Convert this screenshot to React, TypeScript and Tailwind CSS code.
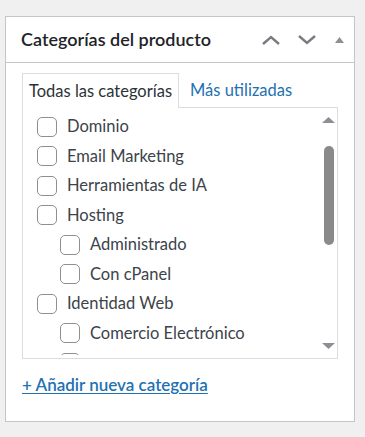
import React from 'react';

type Category = {
  name: string;
  child?: boolean;
};

const categories: Category[] = [
  { name: 'Dominio' },
  { name: 'Email Marketing' },
  { name: 'Herramientas de IA' },
  { name: 'Hosting' },
  { name: 'Administrado', child: true },
  { name: 'Con cPanel', child: true },
  { name: 'Identidad Web' },
  { name: 'Comercio Electrónico', child: true },
  { name: 'Diseño Web', child: true },
];

const font = { fontFamily: '"Segoe UI", Lato, "Noto Sans", sans-serif' };

const ChevronUp = () => (
  <svg width="20" height="12" viewBox="0 0 20 12" fill="none">
    <path d="M2 10 L10 3 L18 10" stroke="#787c82" strokeWidth="2.4" />
  </svg>
);

const ChevronDown = () => (
  <svg width="20" height="12" viewBox="0 0 20 12" fill="none">
    <path d="M2 2 L10 9 L18 2" stroke="#787c82" strokeWidth="2.4" />
  </svg>
);

const Triangle = ({ down = false, w = 9, h = 6 }: { down?: boolean; w?: number; h?: number }) => (
  <svg width={w} height={h} viewBox={`0 0 ${w} ${h}`}>
    <path
      d={down ? `M0 0 L${w} 0 L${w / 2} ${h} Z` : `M0 ${h} L${w} ${h} L${w / 2} 0 Z`}
      fill="#8c8f94"
    />
  </svg>
);

const CategoryRow = ({ category }: { category: Category }) => (
  <li
    className={`flex h-[29.5px] items-center gap-[10px] ${
      category.child ? 'pl-[37px]' : 'pl-[14px]'
    }`}
  >
    <span className="h-[20px] w-[20px] shrink-0 rounded-[5px] border border-[#8c8f94] bg-white" />
    <span className="whitespace-nowrap text-[16.5px] text-[#3c434a]">{category.name}</span>
  </li>
);

export default function App() {
  return (
    <div className="h-[437px] w-[365px] bg-[#f0f0f1] pl-[5px] pt-[16px]" style={font}>
      <div className="flex h-[406px] w-[350px] flex-col border border-[#c3c4c7] bg-white">
        <div className="flex h-[46px] shrink-0 items-center justify-between border-b border-[#c3c4c7] pl-[15px] pr-[1px]">
          <h2 className="text-[18px] font-semibold text-[#1d2327]">Categorías del producto</h2>
          <div className="flex items-center">
            <span className="flex w-[36px] justify-center">
              <ChevronUp />
            </span>
            <span className="flex w-[36px] justify-center">
              <ChevronDown />
            </span>
            <span className="flex w-[28px] justify-center">
              <Triangle w={9} h={6} />
            </span>
          </div>
        </div>

        <div className="px-[16px] pt-[10px]">
          <div className="flex h-[34px] items-stretch">
            <div className="relative z-10 -mb-px flex items-center border border-b-0 border-[#dcdcde] bg-white px-[6px] text-[16.5px] text-[#2c3338]">
              Todas las categorías
            </div>
            <div className="flex items-center pl-[11px] text-[16.5px] text-[#2271b1]">Más utilizadas</div>
          </div>

          <div className="flex h-[252px] w-[316px] items-start border border-[#dcdcde]">
            {/* list is clipped a little above the box edge, like the real scroll area */}
            <ul className="h-[247px] flex-1 overflow-hidden pt-[4px]">
              {categories.map((category) => (
                <CategoryRow key={category.name} category={category} />
              ))}
            </ul>
            <div className="flex h-full w-[17px] flex-col items-center py-[9px]">
              <Triangle w={13} h={6} />
              <div className="mt-[23px] h-[99px] w-[10px] rounded-full bg-[#8a8a8a]" />
              <div className="flex-1" />
              <Triangle down w={13} h={6} />
            </div>
          </div>

          <a
            href="#"
            className="mt-[14px] inline-block text-[17px] font-semibold leading-[24px] text-[#2271b1] underline underline-offset-2"
          >
            + Añadir nueva categoría
          </a>
        </div>
      </div>
    </div>
  );
}
